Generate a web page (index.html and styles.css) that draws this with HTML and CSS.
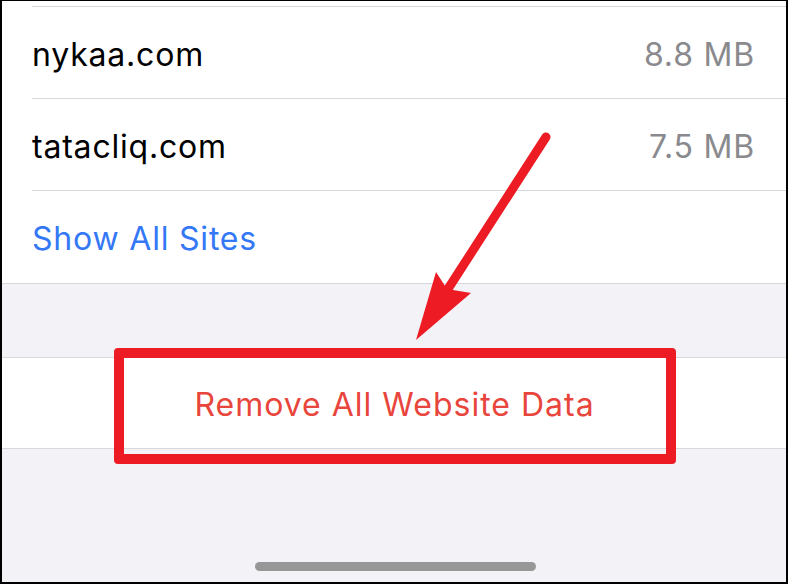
FILE: index.html
```html
<!DOCTYPE html>
<html>
<head>
<meta charset="utf-8">
<link rel="stylesheet" href="styles.css">
</head>
<body>
<div class="frame">
  <div class="group">
    <div class="row"><span class="site">nykaa.com</span><span class="size">8.8 MB</span></div>
    <div class="row"><span class="site">tatacliq.com</span><span class="size">7.5 MB</span></div>
    <div class="row row-last"><span class="link">Show All Sites</span></div>
  </div>
  <div class="gap"></div>
  <div class="group-single">
    <span class="danger">Remove All Website Data</span>
  </div>
  <div class="bottom">
    <div class="home-indicator"></div>
  </div>
  <div class="highlight-box"></div>
  <svg class="arrow" viewBox="0 0 788 584" width="788" height="584">
    <line x1="546" y1="137" x2="446" y2="292" stroke="#ed1c24" stroke-width="9" stroke-linecap="round"/>
    <polygon points="416,340 436,272 447,289 471,293" fill="#ed1c24"/>
  </svg>
</div>
</body>
</html>
```

FILE: styles.css
```css
* { box-sizing: border-box; }
html, body { margin: 0; padding: 0; }
body { background: #fff; }
.frame {
  position: relative;
  width: 788px;
  height: 584px;
  border-style: solid;
  border-color: #000;
  border-width: 1px 2px 2px 2px;
  background: #f2f2f7;
  display: flex;
  flex-direction: column;
  overflow: hidden;
  font-family: Inter, "Liberation Sans", sans-serif;
}
.group {
  background: #fff;
  padding-top: 5px;
  border-bottom: 1px solid #d8d8dc;
}
.row {
  margin-left: 30px;
  height: 92px;
  border-top: 1px solid #d8d8dc;
  padding-right: 32px;
  padding-top: 3px;
  display: flex;
  align-items: center;
  justify-content: space-between;
  font-size: 32px;
  letter-spacing: 0.8px;
}
.row-last { height: 93px; padding-top: 2px; }
.site { color: #000; }
.size { color: #8a8a8e; margin-right: -1px; }
.link { color: #3478f6; }
.gap { height: 73px; }
.group-single {
  background: #fff;
  height: 92px;
  border-top: 1px solid #d8d8dc;
  border-bottom: 1px solid #d8d8dc;
  padding-top: 2px;
  display: flex;
  align-items: center;
  justify-content: center;
  font-size: 32px;
  letter-spacing: 1px;
}
.danger { color: #e8453c; margin-right: -1px; }
.bottom {
  flex: 1;
  display: flex;
  justify-content: center;
  align-items: flex-end;
  padding-bottom: 11px;
}
.home-indicator {
  width: 281px;
  height: 9px;
  border-radius: 5px;
  background: #979797;
  margin-left: 3px;
}
.highlight-box {
  position: absolute;
  left: 112px;
  top: 347px;
  width: 562px;
  height: 116px;
  border: 10px solid #ed1c24;
  border-radius: 4px;
}
.arrow {
  position: absolute;
  left: -2px;
  top: -1px;
}
```
